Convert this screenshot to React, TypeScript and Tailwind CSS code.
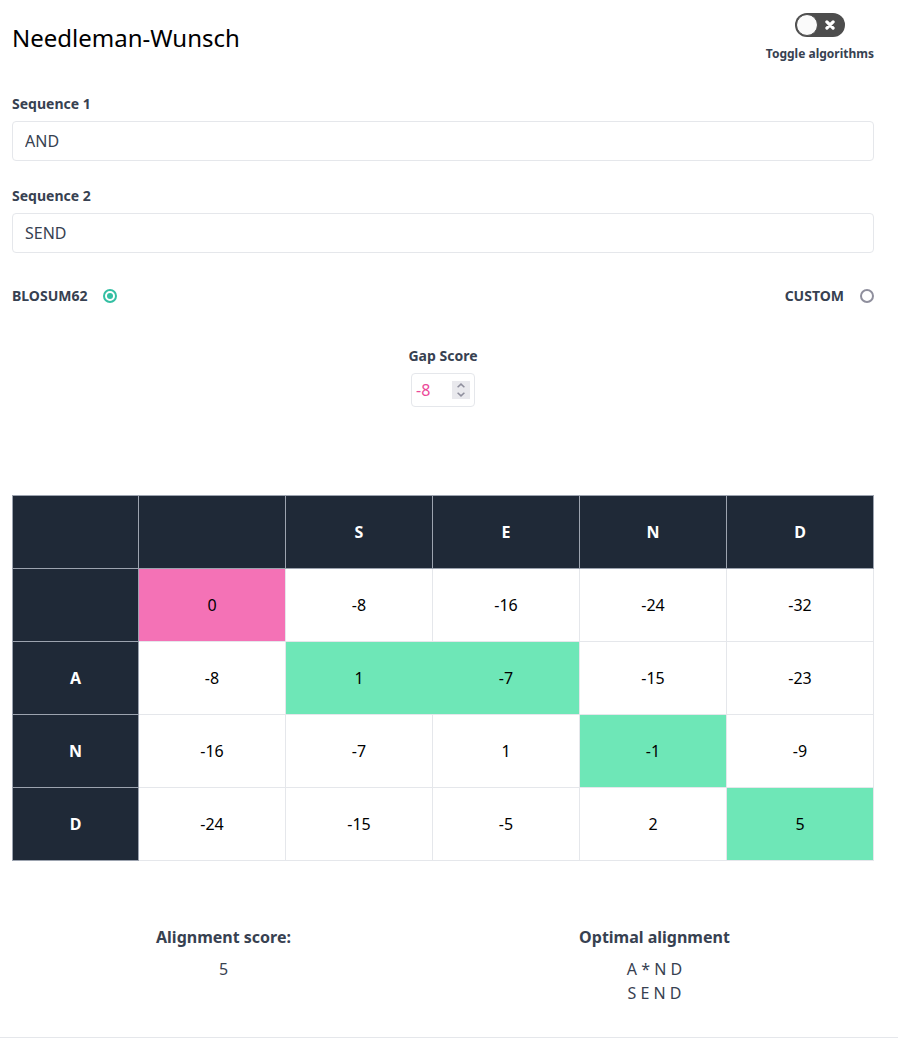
import { useState } from "react";

const columns = ["", "S", "E", "N", "D"];

type Mark = "start" | "path";

const rows: { label: string; scores: number[]; marks: Record<number, Mark> }[] = [
  { label: "", scores: [0, -8, -16, -24, -32], marks: { 0: "start" } },
  { label: "A", scores: [-8, 1, -7, -15, -23], marks: { 1: "path", 2: "path" } },
  { label: "N", scores: [-16, -7, 1, -1, -9], marks: { 3: "path" } },
  { label: "D", scores: [-24, -15, -5, 2, 5], marks: { 4: "path" } },
];

const markClass: Record<Mark, string> = {
  start: "bg-[#f472b6]",
  path: "bg-[#6ee7b7]",
};

function mergedBorder(marks: Record<number, Mark>, index: number) {
  if (marks[index] !== "path") return "";
  if (marks[index + 1] === "path") return "border-r-[#6ee7b7]";
  if (marks[index - 1] === "path") return "border-l-[#6ee7b7]";
  return "";
}

function Toggle() {
  const [on, setOn] = useState(false);
  return (
    <div className="flex flex-col items-center">
      <button
        id="toggle"
        type="button"
        role="switch"
        aria-checked={on}
        aria-labelledby="toggle-label"
        onClick={() => setOn(!on)}
        className={`flex h-6 w-[50px] items-center justify-between rounded-full bg-[#4d4d4d] pr-[10px] pl-px ${on ? "flex-row-reverse" : ""}`}
      >
        <span className="size-[22px] rounded-full border border-[#4d4d4d] bg-[#fafafa]" />
        <svg viewBox="0 0 10 10" className="size-[10px]" aria-hidden="true">
          <path d="M1.9 1.9L8.1 8.1M8.1 1.9L1.9 8.1" stroke="#fff" strokeWidth="3.2" strokeLinecap="round" />
        </svg>
      </button>
      <label id="toggle-label" htmlFor="toggle" className="mt-[9px] text-xs leading-4 font-bold">
        Toggle algorithms
      </label>
    </div>
  );
}

function SequenceField({ id, label, initial }: { id: string; label: string; initial: string }) {
  const [value, setValue] = useState(initial);
  return (
    <div className="flex flex-col gap-[7px]">
      <label htmlFor={id} className="text-sm leading-5 font-bold">
        {label}
      </label>
      <input
        id={id}
        type="text"
        value={value}
        onChange={(e) => setValue(e.target.value)}
        className="h-10 w-full rounded border border-[#e5e7eb] bg-white px-3 text-base"
      />
    </div>
  );
}

const radioClass =
  "size-[14px] appearance-none rounded-full border-2 border-[#8f8f9d] bg-clip-content p-[2px] checked:border-[#34bfa3] checked:bg-[#34bfa3]";

function GapScore() {
  const [gap, setGap] = useState(-8);
  return (
    <div className="flex flex-col items-center gap-[7px]">
      <label htmlFor="gap" className="text-sm leading-5 font-bold">
        Gap Score
      </label>
      <div className="flex h-[34px] w-16 items-center rounded border border-[#e5e7eb] px-1">
        <input
          id="gap"
          type="number"
          value={gap}
          onChange={(e) => setGap(Number(e.target.value))}
          className="w-full min-w-0 appearance-none text-base text-[#ec4899] [-moz-appearance:textfield] [&::-webkit-inner-spin-button]:appearance-none"
        />
        <div className="flex h-[18px] w-[18px] shrink-0 flex-col bg-[#e9e9ed] text-[#8f8f9d]">
          <button
            type="button"
            aria-label="Increase gap score"
            onClick={() => setGap(gap + 1)}
            className="flex flex-1 items-center justify-center"
          >
            <svg viewBox="0 0 8 5" className="h-[5px] w-2" fill="none" stroke="currentColor" strokeWidth="1.5">
              <path d="M0.6 4.3L4 1.1L7.4 4.3" />
            </svg>
          </button>
          <button
            type="button"
            aria-label="Decrease gap score"
            onClick={() => setGap(gap - 1)}
            className="flex flex-1 items-center justify-center"
          >
            <svg viewBox="0 0 8 5" className="h-[5px] w-2" fill="none" stroke="currentColor" strokeWidth="1.5">
              <path d="M0.6 0.7L4 3.9L7.4 0.7" />
            </svg>
          </button>
        </div>
      </div>
    </div>
  );
}

export default function App() {
  const [matrix, setMatrix] = useState("blosum62");
  const headClass = "border border-[#9ca3af] bg-[#1f2937] font-bold text-white";

  return (
    <div className="border-b border-[#e5e7eb] bg-white font-['Noto_Sans',sans-serif] text-base text-[#374151]">
      <main className="pt-[13px] pr-6 pl-3">
        <header className="flex items-start justify-between">
          <h1 className="pt-[9px] text-2xl leading-8 text-black">Needleman-Wunsch</h1>
          <Toggle />
        </header>

        <div className="mt-8 flex flex-col gap-[25px]">
          <SequenceField id="seq1" label="Sequence 1" initial="AND" />
          <SequenceField id="seq2" label="Sequence 2" initial="SEND" />
        </div>

        <div className="mt-[33px] flex justify-between text-sm leading-5 font-bold">
          <label className="flex items-center gap-4">
            BLOSUM62
            <input
              type="radio"
              name="matrix"
              checked={matrix === "blosum62"}
              onChange={() => setMatrix("blosum62")}
              className={radioClass}
            />
          </label>
          <label className="flex items-center gap-4">
            CUSTOM
            <input
              type="radio"
              name="matrix"
              checked={matrix === "custom"}
              onChange={() => setMatrix("custom")}
              className={radioClass}
            />
          </label>
        </div>

        <div className="mt-10">
          <GapScore />
        </div>

        <table className="mt-[88px] w-full table-fixed border-collapse text-center text-black">
          <colgroup>
            <col className="w-[126px]" />
            {columns.map((_, i) => (
              <col key={i} />
            ))}
          </colgroup>
          <thead>
            <tr className="h-[73px]">
              <th className={headClass} />
              {columns.map((c, i) => (
                <th key={i} scope="col" className={headClass}>
                  {c}
                </th>
              ))}
            </tr>
          </thead>
          <tbody>
            {rows.map((row, r) => (
              <tr key={r} className="h-[73px]">
                <th scope="row" className={headClass}>
                  {row.label}
                </th>
                {row.scores.map((score, i) => (
                  <td
                    key={i}
                    className={`border border-[#e5e7eb] ${row.marks[i] ? markClass[row.marks[i]] : ""} ${mergedBorder(row.marks, i)}`}
                  >
                    {score}
                  </td>
                ))}
              </tr>
            ))}
          </tbody>
        </table>
      </main>

      <section className="grid grid-cols-2 pt-16 pr-7 pb-8 pl-2 text-center leading-6">
        <div>
          <h2 className="mb-2 font-bold">Alignment score:</h2>
          <p>5</p>
        </div>
        <div>
          <h2 className="mb-2 font-bold">Optimal alignment</h2>
          <p>A * N D</p>
          <p>S E N D</p>
        </div>
      </section>
    </div>
  );
}
